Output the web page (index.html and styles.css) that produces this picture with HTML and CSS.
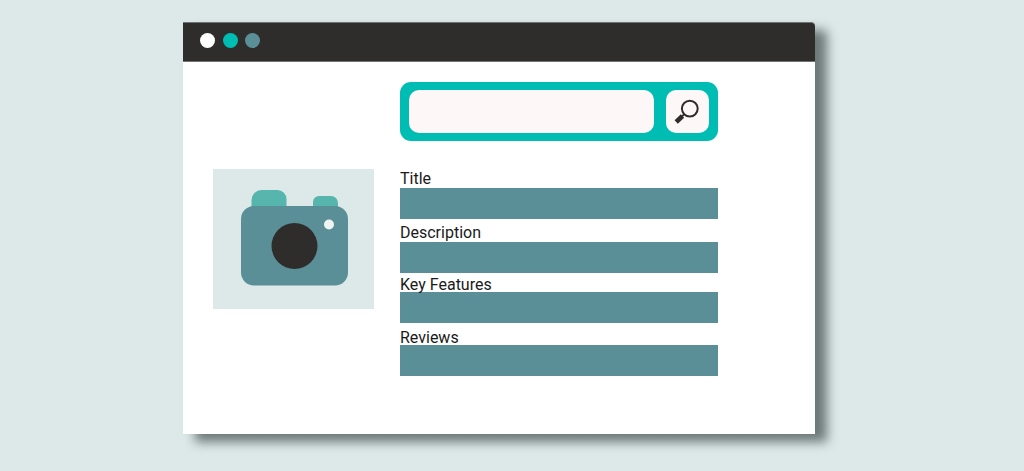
FILE: index.html
```html
<!DOCTYPE html>
<html lang="en">
<head>
<meta charset="utf-8">
<title>Product page</title>
<link rel="stylesheet" href="styles.css">
</head>
<body>
<div class="window">
  <header class="titlebar">
    <span class="dot dot-white"></span>
    <span class="dot dot-teal"></span>
    <span class="dot dot-slate"></span>
  </header>
  <main class="content">
    <div class="search">
      <div class="search-input"></div>
      <div class="search-button">
        <svg class="search-icon" width="26" height="26" viewBox="0 0 26 26" fill="none">
          <circle cx="15.800" cy="9.600" r="7.900" stroke="#2e2d2b" stroke-width="2"/>
          <path d="M10.200 15.200 7.500 17.900" stroke="#2e2d2b" stroke-width="1.800"/>
          <path d="M8.500 17 2.200 23" stroke="#2e2d2b" stroke-width="4.800"/>
        </svg>
      </div>
    </div>
    <div class="photo">
      <svg width="161" height="140" viewBox="0 0 161 140">
        <path d="M38.500 38V31a10 10 0 0 1 10-10h16a9 9 0 0 1 9 9v8z" fill="#56b5ad"/>
        <path d="M100 38v-5a6 6 0 0 1 6-6h12a7 7 0 0 1 7 7v4z" fill="#56b5ad"/>
        <rect x="28" y="37" width="107" height="79.500" rx="13" fill="#5a8f98"/>
        <circle cx="81.500" cy="77" r="23" fill="#2e2d2b"/>
        <circle cx="116" cy="55.500" r="5" fill="#eef3f3"/>
      </svg>
    </div>
    <div class="fields">
      <div class="field"><div class="field-label">Title</div><div class="field-bar"></div></div>
      <div class="field field-wide"><div class="field-label">Description</div><div class="field-bar"></div></div>
      <div class="field field-low"><div class="field-label">Key Features</div><div class="field-bar"></div></div>
      <div class="field field-mid field-low"><div class="field-label">Reviews</div><div class="field-bar"></div></div>
    </div>
  </main>
</div>
</body>
</html>
```

FILE: styles.css
```css
* {
  box-sizing: border-box;
}

html,
body {
  margin: 0;
  height: 100%;
  overflow: hidden;
}

body {
  background: #dde9e9;
  padding: 22px 0 0 183px;
  font-family: Roboto, "Liberation Sans", sans-serif;
}

.window {
  width: 632px;
  height: 412px;
  background: #fff;
  border-top-right-radius: 4px;
  box-shadow: 12px 8px 11px rgba(50, 60, 60, 0.66);
}

.titlebar {
  height: 40px;
  background: #2e2d2b;
  border-top-right-radius: 4px;
  border-top: 1px solid #6f7472;
  border-bottom: 1px solid #6f7472;
  display: flex;
  align-items: center;
  gap: 7.500px;
  padding: 0 0 4px 17px;
}

.dot {
  width: 15px;
  height: 15px;
  border-radius: 50%;
}

.dot-white {
  background: #fff;
}

.dot-teal {
  background: #00bdb4;
}

.dot-slate {
  background: #5a8f98;
}

.content {
  display: grid;
  grid-template-columns: 161px 318px;
  grid-template-rows: 59px auto;
  column-gap: 26px;
  row-gap: 28px;
  padding: 20px 0 0 30px;
}

.search {
  grid-column: 2;
  grid-row: 1;
  display: flex;
  gap: 12px;
  padding: 8px 9.500px 8px 9px;
  background: #00bdb4;
  border-radius: 11px;
}

.search-input {
  flex: 1;
  background: #fdf8f7;
  border-radius: 10px;
}

.search-button {
  width: 43px;
  background: #fdf8f7;
  border-radius: 10px;
  display: flex;
  align-items: center;
  justify-content: center;
}

.search-icon {
  display: block;
}

.photo {
  grid-column: 1;
  grid-row: 2;
  height: 140px;
  background: #dde9e9;
}

.photo svg {
  display: block;
}

.fields {
  grid-column: 2;
  grid-row: 2;
}

.field-label {
  height: 19px;
  line-height: 19px;
  font-size: 16px;
  color: #1a1a1a;
}

.field-bar {
  height: 31px;
  background: #5a8f98;
}

.field-wide {
  margin-top: 4px;
}

.field-mid {
  margin-top: 3px;
}

.field-low .field-label {
  padding-top: 1.500px;
}
```
